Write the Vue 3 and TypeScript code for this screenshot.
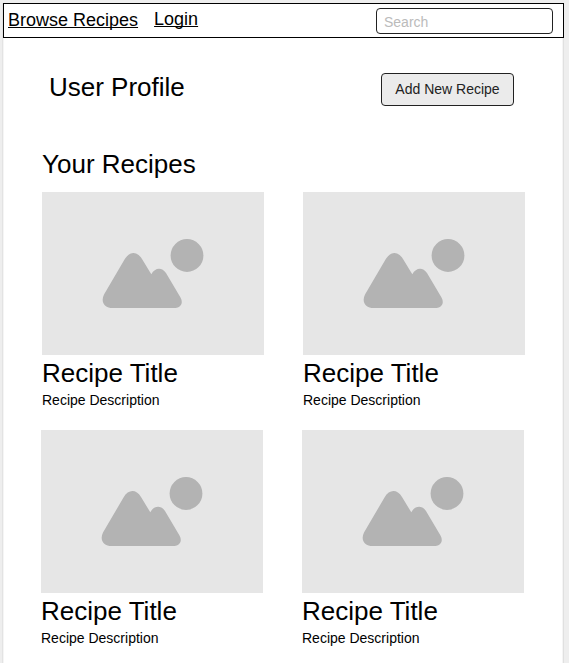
<script setup lang="ts">
import { ref } from 'vue'

interface Recipe {
  id: number
  title: string
  description: string
}

const query = ref<string>('')

const rows: Recipe[][] = [
  [
    { id: 1, title: 'Recipe Title', description: 'Recipe Description' },
    { id: 2, title: 'Recipe Title', description: 'Recipe Description' },
  ],
  [
    { id: 3, title: 'Recipe Title', description: 'Recipe Description' },
    { id: 4, title: 'Recipe Title', description: 'Recipe Description' },
  ],
]
</script>

<template>
  <div class="screen">
    <div class="page">
      <header class="topbar">
        <nav class="links">
          <a class="link" href="#">Browse Recipes</a>
          <a class="link login" href="#">Login</a>
        </nav>
        <input v-model="query" class="search" type="text" placeholder="Search" />
      </header>

      <main class="content">
        <section class="profile">
          <h1 class="heading">User Profile</h1>
          <button class="add" type="button">Add New Recipe</button>
        </section>

        <h2 class="heading section-title">Your Recipes</h2>

        <div v-for="(row, i) in rows" :key="i" class="row">
          <article v-for="recipe in row" :key="recipe.id" class="card">
            <svg class="thumb" viewBox="0 0 222 163" aria-hidden="true">
              <rect width="222" height="163" fill="#e6e6e6" />
              <circle cx="145" cy="63.5" r="16.4" fill="#b3b3b3" />
              <path
                fill="#b3b3b3"
                d="M71 116C62 116 58.5 109.500 62 102.500L82.500 67.500C87.500 59 95 59 100 67L109.300 82.300C113 75.200 120 75 124 81L138.500 105.500C141.800 111.500 138.500 116 131.500 116Z"
              />
            </svg>
            <h3 class="heading title">{{ recipe.title }}</h3>
            <p class="description">{{ recipe.description }}</p>
          </article>
        </div>
      </main>
    </div>
  </div>
</template>

<style>
body {
  margin: 0;
  background: #eeeeee;
}
</style>

<style scoped>
.screen {
  box-sizing: border-box;
  width: 569px;
  height: 663px;
  padding: 3px 5px 0 3px;
  overflow: hidden;
  background: #eeeeee;
  font-family: 'Liberation Sans', Arial, sans-serif;
  color: #000;
}

.page {
  height: 660px;
  background: #fff;
  box-shadow: inset 1px 0 #f5f5f5, inset -1px 0 #e0e0e0, inset -2px 0 #f5f5f5, -1px 0 #e3e3e3;
}

.topbar {
  box-sizing: border-box;
  display: flex;
  justify-content: space-between;
  align-items: flex-start;
  height: 35px;
  padding: 4px 10px 0 4px;
  border: 1px solid #000;
  background: #fff;
}

.links {
  display: flex;
  align-items: flex-start;
  gap: 16px;
  padding-top: 1px;
}

.link {
  margin-top: 1px;
  font-size: 18px;
  line-height: 20px;
  color: #000;
  text-decoration: underline;
  text-decoration-thickness: 1px;
  text-underline-offset: 1px;
  text-decoration-skip-ink: none;
}

.login {
  margin-top: 0;
}

.search {
  box-sizing: border-box;
  width: 177px;
  height: 26px;
  padding: 2px 7px 0;
  border: 1px solid #222;
  border-radius: 4px;
  outline: none;
  background: #fff;
  font: 14px 'Liberation Sans', Arial, sans-serif;
  color: #222;
}

.search::placeholder {
  color: #bbb;
  opacity: 1;
}

.content {
  padding: 35px 38px 0 39px;
}

.profile {
  display: flex;
  justify-content: space-between;
  align-items: flex-start;
  height: 76px;
  padding: 0 12px 0 7px;
}

.heading {
  margin: 0;
  font-size: 26px;
  font-weight: 400;
  line-height: 30px;
}

.profile .heading {
  margin-top: -1px;
}

.add {
  box-sizing: border-box;
  width: 133px;
  height: 33px;
  padding: 0 0 1px;
  border: 1px solid #222;
  border-radius: 4px;
  background: #ebebeb;
  font: 14px 'Liberation Sans', Arial, sans-serif;
  color: #222;
}

.section-title {
  margin-bottom: 13px;
}

.row {
  display: flex;
  gap: 39px;
}

.row + .row {
  margin: 22px 0 0 -1px;
}

.card {
  width: 222px;
}

.thumb {
  display: block;
  width: 222px;
  height: 163px;
}

.title {
  margin-top: 3px;
}

.description {
  margin: 4px 0 0;
  font-size: 14px;
  line-height: 16px;
}
</style>
